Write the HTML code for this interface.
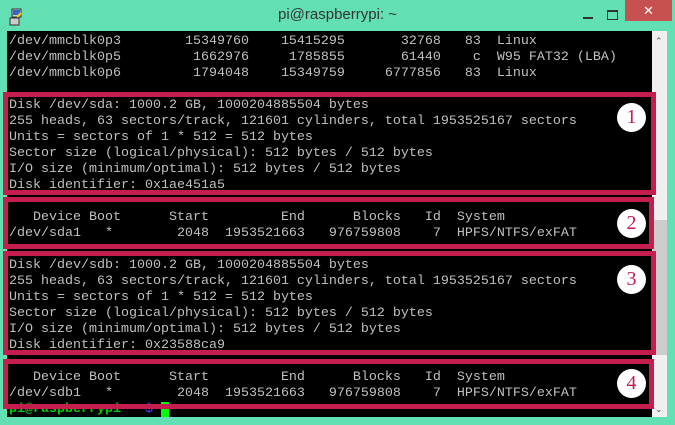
<!DOCTYPE html>
<html><head><meta charset="utf-8"><style>
*{margin:0;padding:0;box-sizing:border-box}
body{width:675px;height:425px;background:#62e0b3;position:relative;overflow:hidden;font-family:"Liberation Sans",sans-serif}
#title{position:absolute;left:0;top:6px;width:675px;text-align:center;font-size:15px;color:#333}
#close{position:absolute;left:625px;top:0;width:47px;height:21px;background:#c75050;color:#fff;text-align:center;font-size:13px;line-height:21px}
#term{position:absolute;left:7px;top:31px;width:645px;height:386px;background:#000;overflow:hidden}
pre{position:absolute;left:2px;top:3px;font-family:"Liberation Mono",monospace;font-size:13.33px;line-height:16px;color:#c0c0c0}
#sb{position:absolute;left:652px;top:31px;width:15px;height:386px;background:#f0f0f0}
#thumb{position:absolute;left:652px;top:220px;width:15px;height:135px;background:#cdcdcd}
.box{position:absolute;border:5px solid #c41e4e}
.c{position:absolute;width:29px;height:29px;border-radius:50%;background:#fff;color:#c41e4e;font-family:"Liberation Serif",serif;font-size:20px;text-align:center;line-height:29px}
</style></head><body>
<svg style="position:absolute;left:9px;top:8px" width="16" height="18" viewBox="0 0 16 18"><rect x="3" y="1" width="9" height="8" fill="#ccc" stroke="#333"/><rect x="4" y="2" width="7" height="5" fill="#36c"/><rect x="1" y="10" width="9" height="7" fill="#ccc" stroke="#333"/><path d="M8 9 L12 5" stroke="#fc0" stroke-width="2"/></svg>
<div id="title">pi@raspberrypi: ~</div>
<div style="position:absolute;left:583px;top:17px;width:10px;height:2px;background:#333"></div>
<div style="position:absolute;left:607px;top:10px;width:11px;height:10px;border:1px solid #333;border-top-width:2px"></div>
<div id="close">✕</div>
<div id="term"><pre>/dev/mmcblk0p3        15349760    15415295       32768   83  Linux
/dev/mmcblk0p5         1662976     1785855       61440    c  W95 FAT32 (LBA)
/dev/mmcblk0p6         1794048    15349759     6777856   83  Linux

Disk /dev/sda: 1000.2 GB, 1000204885504 bytes
255 heads, 63 sectors/track, 121601 cylinders, total 1953525167 sectors
Units = sectors of 1 * 512 = 512 bytes
Sector size (logical/physical): 512 bytes / 512 bytes
I/O size (minimum/optimal): 512 bytes / 512 bytes
Disk identifier: 0x1ae451a5

   Device Boot      Start         End      Blocks   Id  System
/dev/sda1   *        2048  1953521663   976759808    7  HPFS/NTFS/exFAT

Disk /dev/sdb: 1000.2 GB, 1000204885504 bytes
255 heads, 63 sectors/track, 121601 cylinders, total 1953525167 sectors
Units = sectors of 1 * 512 = 512 bytes
Sector size (logical/physical): 512 bytes / 512 bytes
I/O size (minimum/optimal): 512 bytes / 512 bytes
Disk identifier: 0x23588ca9

   Device Boot      Start         End      Blocks   Id  System
/dev/sdb1   *        2048  1953521663   976759808    7  HPFS/NTFS/exFAT
<span style="color:#0c0;font-weight:bold">pi@raspberrypi</span> <span style="color:#44f">~ $</span> <span style="background:#0f0"> </span></pre></div>
<div id="sb"></div><div id="thumb"></div>
<div style="position:absolute;left:655px;top:36px;font-size:9px;color:#555">⌃</div>
<div style="position:absolute;left:655px;top:404px;font-size:9px;color:#555">⌄</div>
<div class="box" style="left:3px;top:92px;width:653px;height:103px"></div>
<div class="box" style="left:3px;top:197px;width:651px;height:52px"></div>
<div class="box" style="left:3px;top:251px;width:653px;height:104px"></div>
<div class="box" style="left:3px;top:359px;width:651px;height:50px"></div>
<div class="c" style="left:617px;top:103px">1</div>
<div class="c" style="left:617px;top:209px">2</div>
<div class="c" style="left:617px;top:265px">3</div>
<div class="c" style="left:617px;top:369px">4</div>
</body></html>
